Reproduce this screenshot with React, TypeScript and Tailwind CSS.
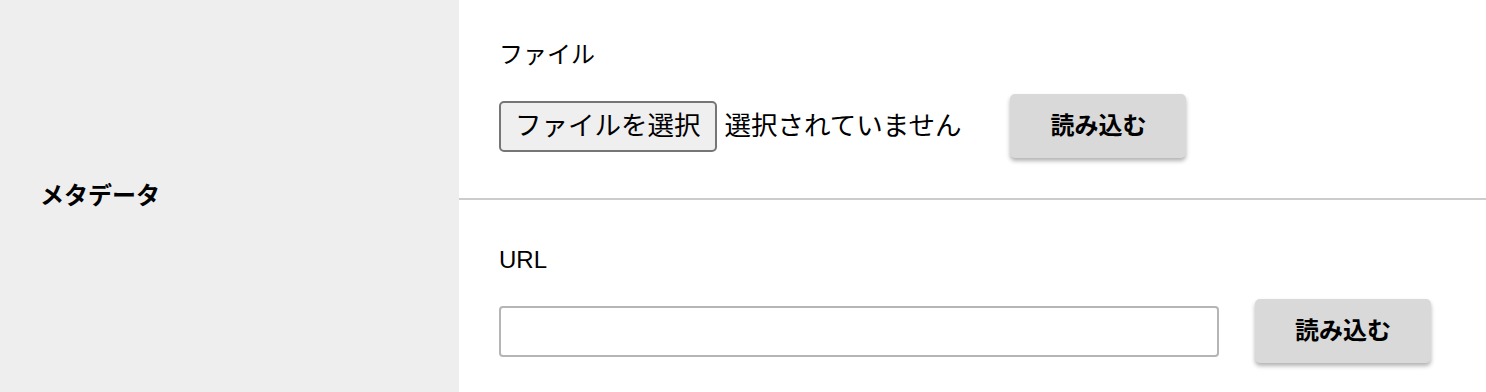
export default function App() {
  const font = { fontFamily: '"Liberation Sans", "Noto Sans CJK JP", sans-serif' };
  return (
    <div className="flex h-[392px] w-[1486px] bg-white text-black" style={font}>
      <div className="flex w-[459px] shrink-0 items-center bg-[#eeeeee] pl-[40px]">
        <span className="text-[24px] font-bold leading-none">メタデータ</span>
      </div>
      <div className="flex flex-1 flex-col">
        <div className="h-[200px] border-b-2 border-[#cccccc] pl-[40px] pt-[42px]">
          <div className="text-[24px] leading-[26px]">ファイル</div>
          <div className="mt-[26px] flex items-center">
            <div className="flex h-[51px] items-center rounded-[5px] border-2 border-[#767676] bg-[#efefef] px-[14px] text-[26.5px] leading-none">
              ファイルを選択
            </div>
            <span className="ml-[8px] text-[26.5px] leading-none">選択されていません</span>
            <button className="ml-[49px] flex h-[64px] w-[176px] items-center justify-center rounded-[5px] bg-[#d9d9d9] text-[24px] font-bold shadow-[0_3px_4px_rgba(0,0,0,0.3)]">
              読み込む
            </button>
          </div>
        </div>
        <div className="flex-1 pl-[40px] pt-[47px]">
          <div className="text-[24px] leading-[26px]">URL</div>
          <div className="mt-[26px] flex items-center">
            <input
              type="text"
              className="h-[51px] w-[720px] rounded-[4px] border-2 border-[#b5b5b5] bg-white px-2 text-[22px] outline-none"
            />
            <button className="ml-[36px] flex h-[64px] w-[176px] items-center justify-center rounded-[5px] bg-[#d9d9d9] text-[24px] font-bold shadow-[0_3px_4px_rgba(0,0,0,0.3)]">
              読み込む
            </button>
          </div>
        </div>
      </div>
    </div>
  );
}
